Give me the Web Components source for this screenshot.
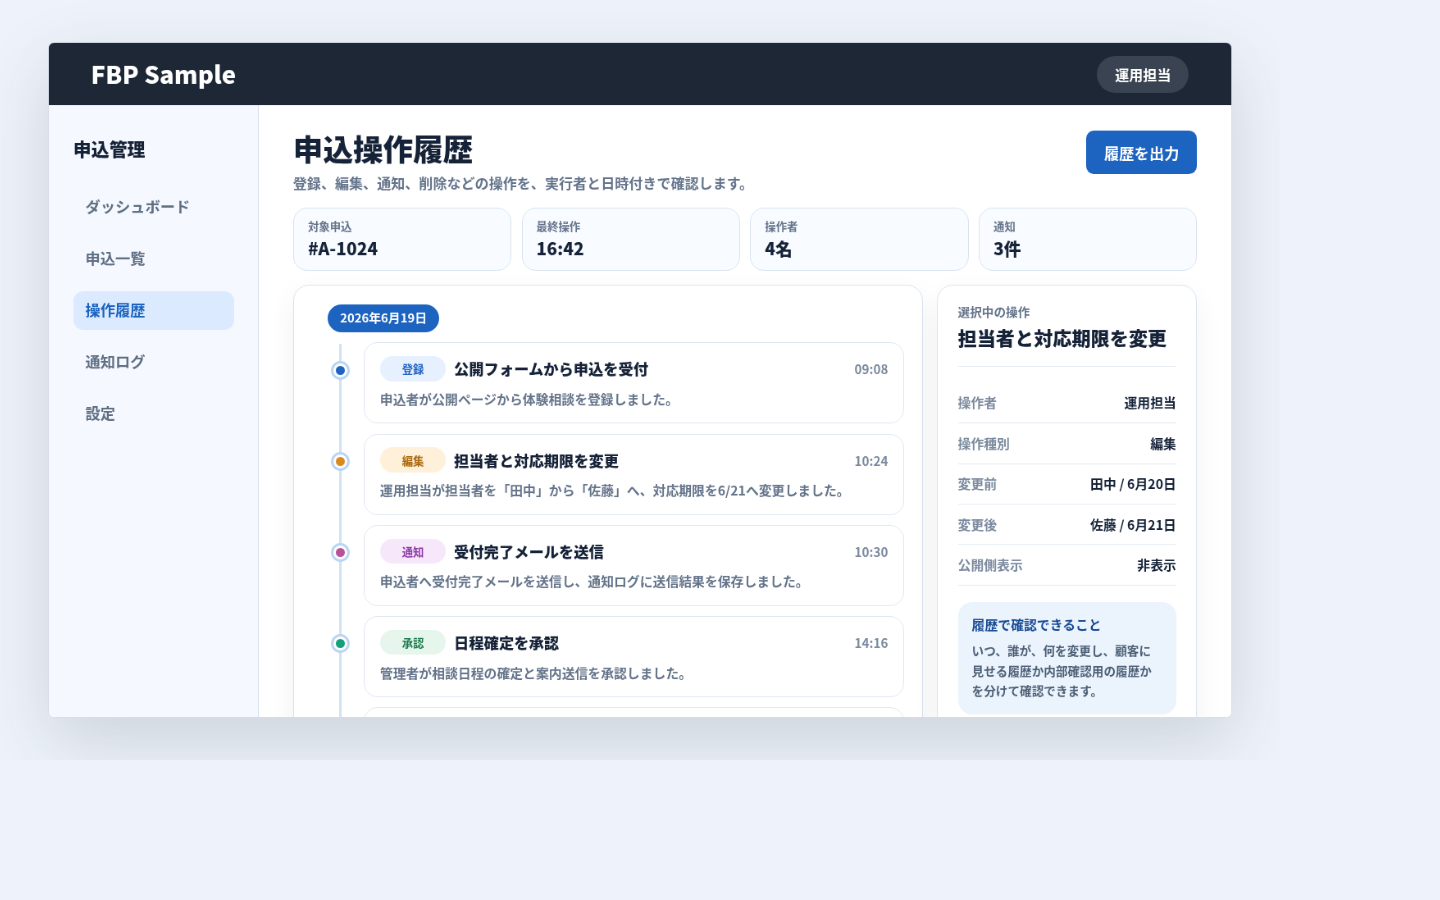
<!doctype html>
<html lang="ja"><head><meta charset="utf-8"><title>FBP Sample</title>
<style>
html,body{margin:0;padding:0;background:#eef3fb;height:900px;overflow:hidden;font-family:"Noto Sans CJK JP","Noto Sans",sans-serif}
</style></head><body>
<fbp-app></fbp-app>
<script>
const FONT='"Noto Sans CJK JP","Noto Sans",sans-serif';
const K=0.82;
const S=css=>css.replace(/(\d*\.?\d+)px/g,(m,v)=>(parseFloat(v)/K).toFixed(3)+'px');
function def(name,css,html,raw){
  customElements.define(name,class extends HTMLElement{
    constructor(){super();const r=this.attachShadow({mode:'open'});r.innerHTML=`<style>${raw?css:S(css)}</style>`+(typeof html==='function'?html(this):html);}
  });
}
def('app-header',`
:host{display:flex;flex:none;box-sizing:border-box;height:62.2px;padding:.6px 42.2px 0 42px;align-items:center;justify-content:space-between;background:#1e2736;color:#fff}
.brand{font-size:24.1px;font-weight:900;line-height:1;position:relative;top:-.7px}
.user{height:37px;display:flex;align-items:center;padding:0 18px;border-radius:19px;background:#3a4351;font-size:14px;font-weight:700}
`,`<span class="brand">FBP Sample</span><span class="user">運用担当</span>`);

def('side-nav',`
:host{display:block;flex:none;width:209.4px;background:#f5f8fe;border-right:1px solid #d5e0ec}
.in{padding:30.6px 24.4px 0}
h2{margin:0 0 26px;font-size:18px;font-weight:900;color:#152238;line-height:26px}
nav{display:flex;flex-direction:column;gap:12.75px}
a{display:block;height:39px;line-height:37px;padding:0 12px;border-radius:10px;font-size:15px;font-weight:700;color:#5f6f84}
a.on{background:#dbeafe;color:#1d63c0}
`,`<div class="in"><h2>申込管理</h2><nav><a>ダッシュボード</a><a>申込一覧</a><a class="on">操作履歴</a><a>通知ログ</a><a>設定</a></nav></div>`);

def('stat-card',`
:host{display:block;box-sizing:border-box;height:63px;border:1px solid #d9e4f0;border-radius:14px;background:#f8fbff;padding:9.8px 14px 0}
.l{font-size:11px;font-weight:700;color:#64748b;line-height:16px}
.v{font-size:17.1px;font-weight:900;color:#152238;line-height:26px;margin-top:1px}
`,h=>`<div class="l">${h.getAttribute('label')}</div><div class="v">${h.getAttribute('value')}</div>`);

const kinds={reg:['#e6f0ff','#1d63c0','#1d63c0'],edit:['#fff1d9','#a8650a','#d98a1f'],note:['#f6e8fa','#8e3aa8','#b9509a'],ok:['#e6f6ec','#1a7a4c','#13a07a']};
def('log-item',`
:host{display:block;position:relative;box-sizing:border-box;height:81.2px;margin-left:36px;border:1px solid #dfe7f2;border-radius:14px;background:#fff;padding:13px 15.3px 0}
.dot{position:absolute;left:-31.5px;top:20px;box-sizing:border-box;width:14px;height:14px;border-radius:50%;background:var(--c);border:2.5px solid #fff;box-shadow:0 0 0 2.4px #b9d4f5}
.top{display:flex;align-items:center;height:25px}
.tag{flex:none;width:66px;height:25px;border-radius:13px;display:flex;align-items:center;justify-content:center;font-size:11px;font-weight:700}
.t{flex:1;margin-left:8px;font-size:15px;font-weight:900;color:#152238}
.time{font-size:12.5px;font-weight:700;color:#7b8a9e}
p{margin:6px 0 0;font-size:13px;font-weight:700;color:#64748b;line-height:24px}
`,h=>{const k=kinds[h.getAttribute('kind')];return `<span class="dot" style="--c:${k[2]}"></span><div class="top"><span class="tag" style="background:${k[0]};color:${k[1]}">${h.getAttribute('tag')}</span><span class="t">${h.getAttribute('title')}</span><span class="time">${h.getAttribute('time')}</span></div><p>${h.getAttribute('desc')}</p>`});

def('log-timeline',`
:host{display:block;box-sizing:border-box;width:630px;flex:none;height:calc(100% + 40px);border:1px solid #d9e4f0;border-radius:16px;background:#fff;box-shadow:0 10px 30px rgba(30,39,54,.06);padding:18.6px 18px 0 34px}
.date{display:inline-block;height:28px;line-height:27px;padding:0 12.2px;border-radius:14px;background:#1d63c0;color:#fff;font-size:12.2px;font-weight:700;vertical-align:top}
.list{position:relative;margin-top:10.3px;display:flex;flex-direction:column;gap:10px}
.list::before{content:"";position:absolute;left:11px;top:1.6px;bottom:0;width:3px;background:#d3e2f3}
`,`<span class="date">2026年6月19日</span><div class="list"><slot></slot></div>`);

def('detail-row',`
:host{display:flex;justify-content:space-between;align-items:center;height:40.5px;box-sizing:border-box;border-bottom:1px solid #e4ebf4;font-size:13px;font-weight:700}
.k{color:#7b8a9e}.v{color:#152238}
`,h=>`<span class="k">${h.getAttribute('k')}</span><span class="v">${h.getAttribute('v')}</span>`);

def('detail-panel',`
:host{display:block;box-sizing:border-box;width:260px;flex:none;height:calc(100% + 40px);border:1px solid #d9e4f0;border-radius:16px;background:#fff;box-shadow:0 10px 30px rgba(30,39,54,.06);padding:17.8px 20px 0}
.s{font-size:12px;font-weight:700;color:#64748b;line-height:17px}
h3{margin:3px 0 0;font-size:19px;font-weight:900;color:#152238;line-height:28px}
.head{border-bottom:1px solid #e4ebf4;padding-bottom:14.6px;margin-bottom:16.2px}
.note{margin-top:16.4px;box-sizing:border-box;height:113px;border-radius:14px;background:#ebf4fd;padding:13.6px 14px}
.nt{font-size:13px;font-weight:700;color:#174a94;line-height:20px}
.nb{margin-top:5.6px;font-size:12px;font-weight:700;color:#4d5f76;line-height:20px}
`,`<div class="head"><div class="s">選択中の操作</div><h3>担当者と対応期限を変更</h3></div><slot></slot><div class="note"><div class="nt">履歴で確認できること</div><div class="nb">いつ、誰が、何を変更し、顧客に見せる履歴か内部確認用の履歴かを分けて確認できます。</div></div>`);

def('app-main',`
:host{display:flex;flex-direction:column;flex:1;min-width:0;background:#fff;padding:25.6px 34px 0;box-sizing:border-box;overflow:hidden}
.hd{display:flex;justify-content:space-between;align-items:flex-start;flex:none}
h1{margin:0;font-size:30px;font-weight:900;color:#152238;line-height:36px}
.sub{font-size:14px;font-weight:700;color:#64748b;line-height:20px;margin-top:6.3px}
button{flex:none;height:43px;width:111px;margin-top:.2px;border:0;border-radius:8px;background:#1d63c0;color:#fff;font:700 15px ${FONT};padding:0}
.stats{flex:none;display:grid;grid-template-columns:repeat(4,1fr);gap:10px;margin-top:14.8px}
.cols{flex:1;min-height:0;display:flex;gap:14px;margin-top:14px}
`,`<div class="hd"><div><h1>申込操作履歴</h1><div class="sub">登録、編集、通知、削除などの操作を、実行者と日時付きで確認します。</div></div><button>履歴を出力</button></div>
<div class="stats"><stat-card label="対象申込" value="#A-1024"></stat-card><stat-card label="最終操作" value="16:42"></stat-card><stat-card label="操作者" value="4名"></stat-card><stat-card label="通知" value="3件"></stat-card></div>
<div class="cols"><log-timeline>
<log-item kind="reg" tag="登録" title="公開フォームから申込を受付" time="09:08" desc="申込者が公開ページから体験相談を登録しました。"></log-item>
<log-item kind="edit" tag="編集" title="担当者と対応期限を変更" time="10:24" desc="運用担当が担当者を「田中」から「佐藤」へ、対応期限を6/21へ変更しました。"></log-item>
<log-item kind="note" tag="通知" title="受付完了メールを送信" time="10:30" desc="申込者へ受付完了メールを送信し、通知ログに送信結果を保存しました。"></log-item>
<log-item kind="ok" tag="承認" title="日程確定を承認" time="14:16" desc="管理者が相談日程の確定と案内送信を承認しました。"></log-item>
<log-item kind="reg" tag="" title="" time="" desc=""></log-item>
</log-timeline><detail-panel>
<detail-row k="操作者" v="運用担当"></detail-row><detail-row k="操作種別" v="編集"></detail-row><detail-row k="変更前" v="田中 / 6月20日"></detail-row><detail-row k="変更後" v="佐藤 / 6月21日"></detail-row><detail-row k="公開側表示" v="非表示"></detail-row>
</detail-panel></div>`);

def('fbp-app',`
:host{display:block;width:1280px;height:760px;overflow:hidden;box-sizing:border-box;padding:42px 48px;background:#eef3fb}
.win{width:${1184/K}px;height:${676/K}px;box-sizing:border-box;border:1px solid #d5dde8;border-radius:${6/K}px;overflow:hidden;background:#fff;display:flex;flex-direction:column;box-shadow:0 ${24/K}px ${70/K}px rgba(30,39,54,.16);transform:scale(${K});transform-origin:0 0;will-change:transform}
.body{flex:1;min-height:0;display:flex}
`,`<div class="win"><app-header></app-header><div class="body"><side-nav></side-nav><app-main></app-main></div></div>`,true);
</script>
</body></html>
